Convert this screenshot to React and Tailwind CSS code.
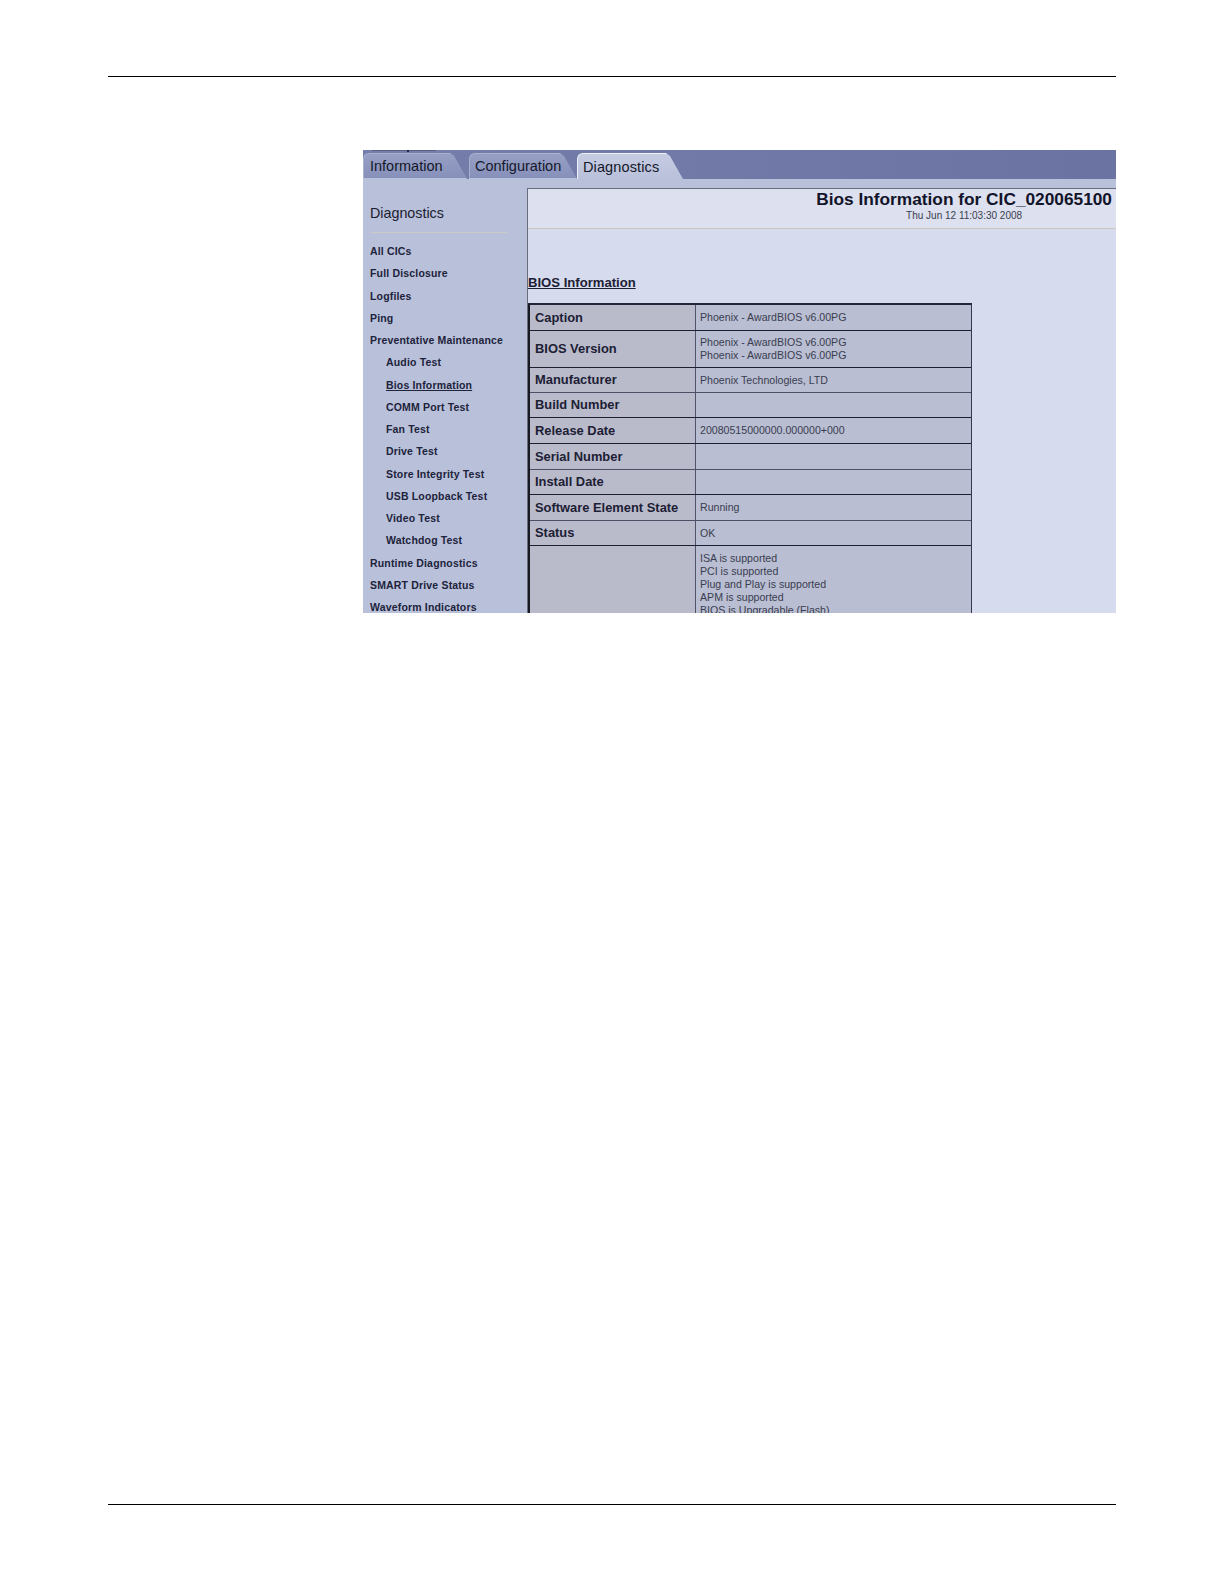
const font = { fontFamily: '"Liberation Sans", Arial, sans-serif' };

const navItems = [
  { label: 'All CICs' },
  { label: 'Full Disclosure' },
  { label: 'Logfiles' },
  { label: 'Ping' },
  { label: 'Preventative Maintenance' },
  { label: 'Audio Test', sub: true },
  { label: 'Bios Information', sub: true, active: true },
  { label: 'COMM Port Test', sub: true },
  { label: 'Fan Test', sub: true },
  { label: 'Drive Test', sub: true },
  { label: 'Store Integrity Test', sub: true },
  { label: 'USB Loopback Test', sub: true },
  { label: 'Video Test', sub: true },
  { label: 'Watchdog Test', sub: true },
  { label: 'Runtime Diagnostics' },
  { label: 'SMART Drive Status' },
  { label: 'Waveform Indicators' },
];

const rows = [
  { label: 'Caption', h: 'h-[26px]', lines: ['Phoenix - AwardBIOS v6.00PG'] },
  { label: 'BIOS Version', h: 'h-[37px]', lines: ['Phoenix - AwardBIOS v6.00PG', 'Phoenix - AwardBIOS v6.00PG'] },
  { label: 'Manufacturer', h: 'h-[25px]', soft: true, lines: ['Phoenix Technologies, LTD'] },
  { label: 'Build Number', h: 'h-[25px]', lines: [] },
  { label: 'Release Date', h: 'h-[26px]', lines: ['20080515000000.000000+000'] },
  { label: 'Serial Number', h: 'h-[26px]', soft: true, lines: [] },
  { label: 'Install Date', h: 'h-[25px]', lines: [] },
  { label: 'Software Element State', h: 'h-[26px]', soft: true, lines: ['Running'] },
  { label: 'Status', h: 'h-[25px]', lines: ['OK'] },
  {
    label: '',
    h: 'h-[80px]',
    top: true,
    lines: ['ISA is supported', 'PCI is supported', 'Plug and Play is supported', 'APM is supported', 'BIOS is Upgradable (Flash)'],
  },
];

function Tab({ label, active, className }) {
  return (
    <div
      className={`h-[26px] rounded-tl-[6px] border-t border-l text-[14.5px] leading-[17px] text-[#15182a] whitespace-nowrap ${
        active
          ? 'pt-[5px] bg-linear-to-b from-[#c6cce2] to-[#b9c0da] border-[#eef0f7] tracking-[0.12px]'
          : 'pt-[4px] bg-linear-to-b from-[#979fc4] to-[#8690b9] border-[#a9b1cf] border-b-[#b9c0da] border-b'
      } ${className}`}
      style={{ clipPath: 'polygon(0 0, calc(100% - 17px) 0, calc(100% - 13px) 3px, 100% 100%, 0 100%)' }}
    >
      {label}
    </div>
  );
}

function Sidebar() {
  return (
    <div className="w-[164px] shrink-0 pl-[7px] overflow-hidden">
      <div className="pt-[25px] text-[14.3px] leading-[18px] text-[#1a1d30]">Diagnostics</div>
      <div className="mt-[10px] h-px w-[137px] bg-[#ccc9c8]" />
      <div className="mt-[7px]">
        {navItems.map((item) => (
          <div
            key={item.label}
            className={`h-[22.25px] text-[10.5px] leading-[22.25px] font-bold tracking-[0.17px] whitespace-nowrap text-[#20233a] ${
              item.sub ? 'pl-[16px]' : ''
            } ${item.active ? 'underline' : ''}`}
          >
            {item.label}
          </div>
        ))}
      </div>
    </div>
  );
}

function BiosTable() {
  return (
    <div className="w-[444px] border-t-2 border-l-2 border-r border-t-[#23263a] border-l-[#161a22] border-r-[#35384e] bg-[#b9bed2]">
      {rows.map((row) => (
        <div
          key={row.label || 'features'}
          className={`flex ${row.h} border-b ${row.soft ? 'border-[#4c5066]' : 'border-[#1d2030]'}`}
        >
          <div className="w-[166px] shrink-0 pl-[5px] flex items-center border-r border-[#50546a] bg-[#b9bbcb]">
            <span className="text-[12.9px] font-bold text-[#1d2034] whitespace-nowrap">{row.label}</span>
          </div>
          <div className={`flex-1 pl-[4px] flex flex-col text-[10.6px] leading-[13px] text-[#3a3d50] ${row.top ? 'pt-[6px]' : 'justify-center'}`}>
            {row.lines.map((line, i) => (
              <div key={i} className="whitespace-nowrap">{line}</div>
            ))}
          </div>
        </div>
      ))}
    </div>
  );
}

export default function App() {
  return (
    <div className="w-[1224px] h-[1584px] bg-white flex flex-col" style={font}>
      <div className="ml-[108px] w-[1008px] mt-[76px] h-px bg-black" />

      <div className="mt-[73px] ml-[363px] w-[753px] h-[463px] overflow-hidden flex flex-col bg-[#b9c0da]">
        <div className="relative h-[29px] shrink-0 flex items-end bg-linear-to-r from-[#767fab] to-[#6a73a2]">
          <div className="absolute top-0 left-[9px] w-[64px] h-px bg-[#5c6084]" />
          <div className="absolute top-0 left-[44px] w-[2px] h-[2px] bg-[#23263a]" />
          <Tab label="Information" className="w-[104px] pl-[6px] bg-[#8d96bc]" />
          <Tab label="Configuration" className="w-[108px] ml-[2px] pl-[5px]" />
          <Tab label="Diagnostics" active className="w-[106px] pl-[5px]" />
        </div>

        <div className="flex flex-1 min-h-0">
          <Sidebar />
          <div className="flex-1 min-w-0 mt-[9px] border-t border-l border-[#6a6d7e] bg-[#d6dbed] overflow-hidden">
            <div className="h-[40px] bg-[#dde0ee] border-b border-[#c9c8bd] pr-[4px] flex justify-end">
              <div className="flex flex-col items-center">
                <div className="text-[17.3px] leading-[20px] font-bold text-[#12142a] whitespace-nowrap">
                  Bios Information for CIC_020065100
                </div>
                <div className="mt-px text-[10px] leading-[12px] text-[#3a3d50] whitespace-nowrap">
                  Thu Jun 12 11:03:30 2008
                </div>
              </div>
            </div>
            <div className="pt-[46px]">
              <div className="text-[13.1px] leading-[16px] font-bold underline text-[#1d2034]">BIOS Information</div>
              <div className="mt-[12px]">
                <BiosTable />
              </div>
            </div>
          </div>
        </div>
      </div>

      <div className="ml-[108px] w-[1008px] mt-[891px] h-px bg-black" />
    </div>
  );
}
